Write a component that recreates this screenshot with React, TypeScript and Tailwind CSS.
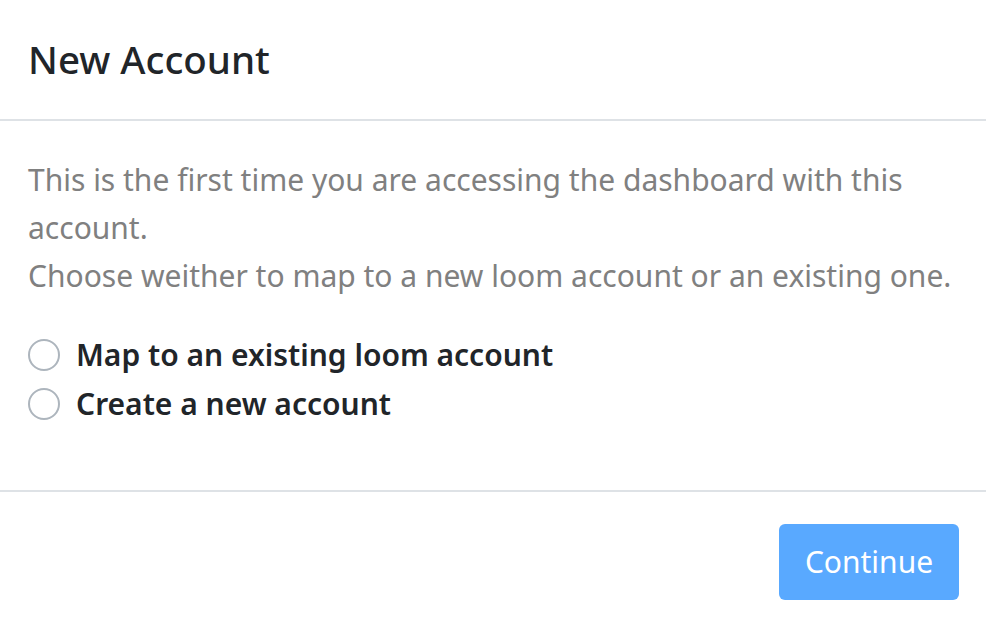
export default function App() {
  return (
    <div className="w-[986px] h-[627px] bg-white flex flex-col font-['Noto_Sans',sans-serif] overflow-hidden">
      {/* header */}
      <div className="h-[121px] shrink-0 flex items-center px-[28px] border-b-2 border-[#dee2e6]">
        <h5 className="text-[38.5px] font-medium text-[#212529] leading-none">New Account</h5>
      </div>

      {/* body */}
      <div className="px-[28px] pt-[35px] pb-[62px] text-[30px] leading-[48px] text-[#808080]">
        <p className="whitespace-nowrap">This is the first time you are accessing the dashboard with this</p>
        <p className="whitespace-nowrap">account.</p>
        <p className="whitespace-nowrap">Choose weither to map to a new loom account or an existing one.</p>

        <div className="mt-[30px] flex flex-col">
          {["Map to an existing loom account", "Create a new account"].map((label) => (
            <label key={label} className="flex items-center gap-[16px] h-[49px]">
              <span className="w-[32px] h-[32px] rounded-full border-2 border-[#adb5bd] bg-white shrink-0" />
              <span className="text-[30px] font-semibold text-[#212529] whitespace-nowrap">{label}</span>
            </label>
          ))}
        </div>
      </div>

      {/* footer */}
      <div className="flex-1 flex items-start justify-end pt-[32px] px-[27px] border-t-2 border-[#dee2e6]">
        <button
          disabled
          className="w-[180px] h-[76px] rounded-[6px] bg-[#59a9ff] text-white text-[30px] leading-none"
        >
          Continue
        </button>
      </div>
    </div>
  );
}
